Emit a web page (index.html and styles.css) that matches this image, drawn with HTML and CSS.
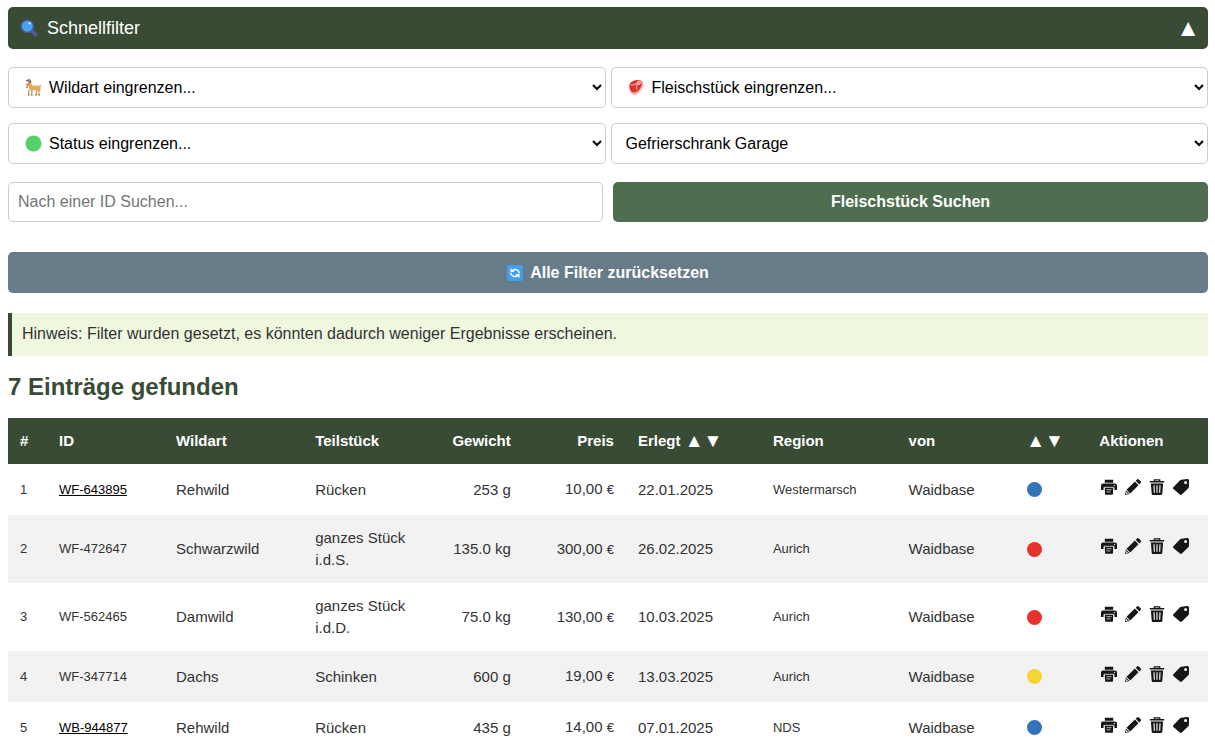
FILE: index.html
```html
<!DOCTYPE html>
<html lang="de">
<head>
<meta charset="utf-8">
<meta name="viewport" content="width=device-width, initial-scale=1">
<title>Waidbase</title>
<link rel="stylesheet" href="styles.css">
</head>
<body>
<svg class="sprite" aria-hidden="true">
  <symbol id="print" viewBox="0 0 16 16">
    <path fill="#161616" d="M3.800 .8h8.400v3H3.800zM2 4.600h12a2 2 0 0 1 2 2V11h-2.600V8.600H2.600V11H0V6.600a2 2 0 0 1 2-2z"/>
    <path fill="#161616" d="M4 8.600h8V15a.8.8 0 0 1-.8.8H4.800A.8.8 0 0 1 4 15z"/>
    <path fill="none" stroke="#ccc" stroke-width=".9" d="M3.300 12.500V8.300h9.400v4.200M5.500 10.700h5M5.500 12.900h4"/>
    <circle cx="13.500" cy="6.500" r=".7" fill="#ddd"/>
  </symbol>
  <symbol id="edit" viewBox="0 0 16 16">
    <path fill="#161616" d="M12 .5a1.300 1.300 0 0 1 1.800 0l1.800 1.800a1.300 1.300 0 0 1 0 1.800l-1.300 1.300L10.700 1.800zM9.900 2.600l3.600 3.600-8.300 8.200-3.700-3.600zM1 11.500l3.500 3.500L0 16z"/>
    <path fill="#fff" d="M1.300 13l1.700 1.700-1.700.4-.4-.4z"/>
  </symbol>
  <symbol id="trash" viewBox="0 0 16 16">
    <path fill="none" stroke="#161616" stroke-width="1.300" d="M5.300 2.500V.9h5.400v1.600"/>
    <path fill="#161616" d="M.8 2h14.400v1.600H.8zM1.900 4.600h12.200l-.8 10.200a1.300 1.300 0 0 1-1.300 1.200H4a1.300 1.300 0 0 1-1.300-1.200z"/>
    <path stroke="#ddd" stroke-width="1.300" d="M5 6.200l.4 7.600M8 6.200v7.600M11 6.200l-.4 7.600"/>
  </symbol>
  <symbol id="tag" viewBox="0 0 16 16">
    <path fill="#161616" fill-rule="evenodd" d="M8.500 .7L14 0A1.800 1.800 0 0 1 16 1.900l-.1 6a2 2 0 0 1-.6 1.300l-6.500 6.300a1.300 1.300 0 0 1-1.900 0L.4 10a1.200 1.200 0 0 1 0-1.800l6.400-6.600A2.800 2.800 0 0 1 8.500.7zM12.600 2.100a1.500 1.500 0 1 0 0 3 1.500 1.500 0 0 0 0-3z"/>
  </symbol>
</svg>

<main class="page">
  <button class="panel-head" type="button" aria-expanded="true">
    <span class="panel-title">
      <svg class="glass" viewBox="0 0 18 18" aria-hidden="true">
        <path stroke="#5e5393" stroke-width="4" stroke-linecap="round" d="M12.500 12.500l3 2.800"/>
        <circle cx="7.300" cy="7.300" r="6.100" fill="#46a4f2" stroke="#4b5ea4" stroke-width="1.400"/>
        <path stroke="#e4f4ff" stroke-width="1.500" stroke-linecap="round" d="M9.300 3.700l.9 1"/>
      </svg>
      Schnellfilter
    </span>
    <span class="panel-arrow">▲</span>
  </button>

  <form class="filters">
    <div class="selects">
      <div class="field has-icon">
        <select aria-label="Wildart"><option>Wildart eingrenzen...</option></select>
        <svg class="field-icon" viewBox="0 0 17 17" aria-hidden="true">
          <path fill="none" stroke="#79594f" stroke-width="1.200" d="M4.500 4.200C4.500 2 3 1 1 1.400M5.500 4C6 2 5 .5 3.300.5"/>
          <path fill="#e5ac5b" d="M.5 5.800L3 3.600l3 .5 1.200 2.400 6.300.2 1.800-.9.9 1.500-.8 1 .3 3-1.200 1.200v3h-1.300v-3l-1-1.500H7.900L7.500 15H6.200l-.3-3.500-1.600-1.700-.8-2.500-2.300-.2z"/>
          <path fill="none" stroke="#d6963f" stroke-width="1.200" d="M4.800 10.800l-1.300 1.400.2 3.300M11.200 11l.7 1.700-.8 2.600"/>
          <path stroke="#70523f" stroke-width="1.200" d="M3 15.800h1.500M6 15.800h1.600M10.400 15.800h1.500M13.500 15.800h1.500M2 7.500v1.600"/>
          <circle cx="3" cy="5.300" r=".5" fill="#4c352b"/>
        </svg>
      </div>
      <div class="field has-icon">
        <select aria-label="Fleischstück"><option>Fleischstück eingrenzen...</option></select>
        <svg class="field-icon" viewBox="0 0 17 17" aria-hidden="true">
          <path fill="#f4b5a8" d="M3 4.500C6 1 12 0 14.500 2.500c2.500 3 .5 6.500-1.500 8.500-2 3.500-6 6-8.500 4.500C1.500 14 1 8 3 4.500z"/>
          <path fill="#e2322d" d="M1.800 4.800C3.500 1.800 8.800.5 11.600 1.400c3 1.100 2.600 4.500 1 7-1.600 3-4.700 5.800-7.300 5.100C2 12.700.4 8 1.800 4.800z"/>
          <path fill="none" stroke="#f6b3a8" stroke-width="1.100" d="M2.500 5.600c2.500 1.700 5-.5 7.500-1.800M9.900 4c-1.500 2.500-1.700 4-1.400 6.500"/>
          <circle cx="10.900" cy="3.800" r="1.600" fill="#ed7971" stroke="#fbd3c8"/>
        </svg>
      </div>
      <div class="field has-icon">
        <select aria-label="Status"><option>Status eingrenzen...</option></select>
        <svg class="field-icon" viewBox="0 0 17 17" aria-hidden="true"><circle cx="8.500" cy="8.500" r="8" fill="#55d267"/></svg>
      </div>
      <div class="field">
        <select aria-label="Lagerort"><option>Gefrierschrank Garage</option></select>
      </div>
    </div>
    <div class="search">
      <input class="search-input" type="text" aria-label="ID" placeholder="Nach einer ID Suchen...">
      <button class="btn btn-search" type="submit">Fleischstück Suchen</button>
    </div>
    <button class="btn btn-reset" type="reset">
      <svg class="reset-icon" viewBox="0 0 16 16" aria-hidden="true">
        <rect width="16" height="16" rx="2" fill="#429ff0"/>
        <path fill="none" stroke="#fff" stroke-width="1.600" d="M12.300 8.300C12 5 8.500 3.500 5.800 5.200M3.700 7.700C4 11 7.500 12.500 10.200 10.800"/>
        <path fill="#fff" d="M3.500 3v4h4zM12.500 13V9h-4z"/>
      </svg>
      Alle Filter zurücksetzen
    </button>
  </form>

  <p class="hint">Hinweis: Filter wurden gesetzt, es könnten dadurch weniger Ergebnisse erscheinen.</p>
  <h2 class="count">7 Einträge gefunden</h2>

  <table class="entries">
    <colgroup>
      <col class="c-no"><col class="c-id"><col class="c-game"><col class="c-part"><col class="c-weight"><col class="c-price"><col class="c-date"><col class="c-region"><col class="c-from"><col class="c-status"><col class="c-actions">
    </colgroup>
    <thead>
      <tr>
        <th>#</th><th>ID</th><th>Wildart</th><th>Teilstück</th><th class="num">Gewicht</th><th class="num">Preis</th>
        <th><span class="sort">Erlegt <a href="#">▲</a><a href="#">▼</a></span></th>
        <th>Region</th><th>von</th>
        <th><span class="sort"><a href="#">▲</a><a href="#">▼</a></span></th>
        <th>Aktionen</th>
      </tr>
    </thead>
    <tbody>
      <tr>
        <td class="small">1</td><td class="small"><a class="id-link" href="#">WF-643895</a></td><td>Rehwild</td><td class="part">Rücken</td><td class="num">253 g</td><td class="num">10,00 <small>€</small></td><td>22.01.2025</td><td class="small">Westermarsch</td><td>Waidbase</td><td><span class="dot blue"></span></td>
        <td><div class="actions"><button type="button" aria-label="Drucken"><svg><use href="#print"/></svg></button><button type="button" aria-label="Bearbeiten"><svg><use href="#edit"/></svg></button><button type="button" aria-label="Löschen"><svg><use href="#trash"/></svg></button><button type="button" aria-label="Etikett"><svg><use href="#tag"/></svg></button></div></td>
      </tr>
      <tr>
        <td class="small">2</td><td class="small">WF-472647</td><td>Schwarzwild</td><td class="part">ganzes Stück i.d.S.</td><td class="num">135.0 kg</td><td class="num">300,00 <small>€</small></td><td>26.02.2025</td><td class="small">Aurich</td><td>Waidbase</td><td><span class="dot red"></span></td>
        <td><div class="actions"><button type="button" aria-label="Drucken"><svg><use href="#print"/></svg></button><button type="button" aria-label="Bearbeiten"><svg><use href="#edit"/></svg></button><button type="button" aria-label="Löschen"><svg><use href="#trash"/></svg></button><button type="button" aria-label="Etikett"><svg><use href="#tag"/></svg></button></div></td>
      </tr>
      <tr>
        <td class="small">3</td><td class="small">WF-562465</td><td>Damwild</td><td class="part">ganzes Stück i.d.D.</td><td class="num">75.0 kg</td><td class="num">130,00 <small>€</small></td><td>10.03.2025</td><td class="small">Aurich</td><td>Waidbase</td><td><span class="dot red"></span></td>
        <td><div class="actions"><button type="button" aria-label="Drucken"><svg><use href="#print"/></svg></button><button type="button" aria-label="Bearbeiten"><svg><use href="#edit"/></svg></button><button type="button" aria-label="Löschen"><svg><use href="#trash"/></svg></button><button type="button" aria-label="Etikett"><svg><use href="#tag"/></svg></button></div></td>
      </tr>
      <tr>
        <td class="small">4</td><td class="small">WF-347714</td><td>Dachs</td><td class="part">Schinken</td><td class="num">600 g</td><td class="num">19,00 <small>€</small></td><td>13.03.2025</td><td class="small">Aurich</td><td>Waidbase</td><td><span class="dot yellow"></span></td>
        <td><div class="actions"><button type="button" aria-label="Drucken"><svg><use href="#print"/></svg></button><button type="button" aria-label="Bearbeiten"><svg><use href="#edit"/></svg></button><button type="button" aria-label="Löschen"><svg><use href="#trash"/></svg></button><button type="button" aria-label="Etikett"><svg><use href="#tag"/></svg></button></div></td>
      </tr>
      <tr>
        <td class="small">5</td><td class="small"><a class="id-link" href="#">WB-944877</a></td><td>Rehwild</td><td class="part">Rücken</td><td class="num">435 g</td><td class="num">14,00 <small>€</small></td><td>07.01.2025</td><td class="small">NDS</td><td>Waidbase</td><td><span class="dot blue"></span></td>
        <td><div class="actions"><button type="button" aria-label="Drucken"><svg><use href="#print"/></svg></button><button type="button" aria-label="Bearbeiten"><svg><use href="#edit"/></svg></button><button type="button" aria-label="Löschen"><svg><use href="#trash"/></svg></button><button type="button" aria-label="Etikett"><svg><use href="#tag"/></svg></button></div></td>
      </tr>
    </tbody>
  </table>
</main>
</body>
</html>
```

FILE: styles.css
```css
* { box-sizing: border-box; }

body {
  margin: 0;
  background: #fff;
  color: #333;
  font: 16px/24px "Liberation Sans", Arial, sans-serif;
}

.sprite { display: none; }

.page { padding: 7px 7px 0 8px; }

button, select, input { font-family: inherit; font-size: 16px; }

button { border: 0; cursor: pointer; }

.panel-head {
  display: flex;
  align-items: center;
  justify-content: space-between;
  width: 100%;
  padding: 10px 8px 10px 12px;
  border-radius: 5px;
  background: #394b35;
  color: #fff;
  font-size: 18px;
  line-height: 22px;
}

.panel-title { display: flex; align-items: center; gap: 9px; }
.glass { width: 18px; height: 18px; }
.panel-arrow { font-size: 24px; }

.filters { margin-top: 18px; }

.selects {
  display: grid;
  grid-template-columns: 1fr 1fr;
  gap: 15px 5px;
}

.field { position: relative; }

.field select {
  display: block;
  width: 100%;
  height: 41px;
  padding: 10px 0 10px 10px;
  border: 1px solid #ccc;
  border-radius: 5px;
  background: #fff;
  color: #000;
}

.has-icon select { padding-left: 36px; }

.field-icon {
  position: absolute;
  left: 17px;
  top: 12px;
  width: 17px;
  height: 17px;
  pointer-events: none;
}

.search {
  display: grid;
  grid-template-columns: 1fr 1fr;
  gap: 10px;
  margin-top: 18px;
}

.search-input {
  min-width: 0;
  height: 40px;
  padding: 0 9px;
  border: 1px solid #ccc;
  border-radius: 5px;
}

.search-input::placeholder { color: #757575; }

.btn {
  border-radius: 5px;
  color: #fff;
  font-weight: bold;
}

.btn-search { background: #4f6d4f; }

.btn-reset {
  display: flex;
  align-items: center;
  justify-content: center;
  gap: 7px;
  width: 100%;
  height: 41px;
  margin-top: 30px;
  background: #667c89;
}

.reset-icon { width: 16px; height: 16px; }

.hint {
  margin: 20px 0 0;
  padding: 9px 10px 10px;
  border-left: 4px solid #394b35;
  background: #eff7df;
}

.count {
  margin: 16px 0;
  color: #394b35;
  font-size: 24px;
  line-height: 30px;
}

.entries {
  width: 100%;
  table-layout: fixed;
  border-collapse: collapse;
  font-size: 15px;
}

.c-no { width: 3.25%; }
.c-id { width: 9.75%; }
.c-game { width: 11.6%; }
.c-part { width: 10.2%; }
.c-weight { width: 8.1%; }
.c-price { width: 8.6%; }
.c-date { width: 11.25%; }
.c-region { width: 11.3%; }
.c-from { width: 9.8%; }
.c-status { width: 6.1%; }

.entries th,
.entries td {
  padding: 12px;
  text-align: left;
  vertical-align: middle;
}

.entries th {
  padding-top: 11px;
  padding-bottom: 11px;
  background: #394b35;
  color: #fff;
}

.entries td { height: 51px; }
.entries tbody tr:nth-child(even) { background: #f2f2f2; }

.entries .num { text-align: right; white-space: nowrap; }
.entries .small { font-size: 13px; }
.entries .part { line-height: 22px; }
.entries small { font-size: 13px; }

.sort { display: flex; align-items: center; white-space: pre; }
.sort a {
  color: inherit;
  font-size: 19px;
  line-height: 20px;
  text-decoration: none;
}

.id-link { color: #000; }

.dot {
  display: block;
  width: 15px;
  height: 15px;
  margin-left: 1px;
  border-radius: 50%;
}

.blue { background: #3373bb; }
.red { background: #e7322a; }
.yellow { background: #f4d536; }

.actions {
  display: flex;
  gap: 8px;
  padding: 0 2px 6px;
}

.actions button {
  display: block;
  padding: 0;
  background: none;
}

.actions svg { display: block; width: 16px; height: 16px; }
```
